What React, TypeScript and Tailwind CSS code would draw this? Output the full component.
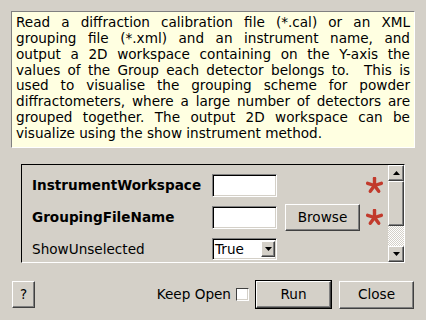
import React from "react";

const raised =
  "border-t border-l border-t-white border-l-white border-b border-r border-b-[#404040] border-r-[#404040] shadow-[inset_-1px_-1px_0_#808080] bg-[#d4d0c8]";

function Star() {
  const arms = [-90, -18, 54, 126, 198];
  return (
    <svg width="17" height="17" viewBox="-8.5 -8.5 17 17">
      {arms.map((a) => {
        const r = (a * Math.PI) / 180;
        return (
          <line
            key={a}
            x1={0}
            y1={0}
            x2={Math.cos(r) * 7.2}
            y2={Math.sin(r) * 7.2}
            stroke="#c23a2c"
            strokeWidth={3.4}
            strokeLinecap="round"
          />
        );
      })}
    </svg>
  );
}

function ArrowUp() {
  return (
    <svg width="7" height="4" viewBox="0 0 7 4">
      <polygon points="0,4 7,4 3.5,0" fill="#000" />
    </svg>
  );
}
function ArrowDown() {
  return (
    <svg width="7" height="4" viewBox="0 0 7 4">
      <polygon points="0,0 7,0 3.5,4" fill="#000" />
    </svg>
  );
}

const sunken =
  "bg-white border-t border-l border-t-[#808080] border-l-[#808080] border-b border-r border-b-white border-r-white shadow-[inset_1px_1px_0_#000000,inset_-1px_-1px_0_#d4d0c8]";

const lines = [
  "Read a diffraction calibration file (*.cal) or an XML",
  "grouping file (*.xml) and an instrument name, and",
  "output a 2D workspace containing on the Y-axis the",
  "values of the Group each detector belongs to.\u00a0 This is",
  "used to visualise the grouping scheme for powder",
  "diffractometers, where a large number of detectors are",
  "grouped together. The output 2D workspace can be",
];

export default function App() {
  return (
    <div
      className="w-[426px] h-[320px] bg-[#d4d0c8] text-black flex flex-col overflow-hidden"
      style={{ fontFamily: '"DejaVu Sans", sans-serif' }}
    >
      <div className="pt-[11px] pl-[11px]">
        <div className="w-[404px] h-[137px] bg-[#ffffe1] border-t border-l border-t-[#808080] border-l-[#808080] border-b border-r border-b-white border-r-white pl-[4px] pr-[4px] pt-[3px] text-[13.6px] leading-[15.86px]">
          {lines.map((l) => (
            <div key={l} className="text-justify [text-align-last:justify] whitespace-nowrap">
              {l}
            </div>
          ))}
          <div>visualize using the show instrument method.</div>
        </div>
      </div>

      <div className="mt-[16px] ml-[21px] w-[384px] h-[99px] flex border-t border-l border-t-black border-l-black border-b border-r border-b-white border-r-white">
        <div className="flex-1 overflow-hidden pl-[10px] pt-[4px] text-[13.6px]">
          <div className="h-[32px] flex items-center">
            <div className="w-[180px] font-bold">InstrumentWorkspace</div>
            <div className={`w-[65px] h-[23px] ${sunken}`}></div>
            <div className="w-[83px]"></div>
            <div className="ml-[6px] w-[17px] h-[17px] flex"><Star /></div>
          </div>
          <div className="h-[32px] flex items-center">
            <div className="w-[180px] font-bold">GroupingFileName</div>
            <div className={`w-[65px] h-[23px] ${sunken}`}></div>
            <div className="w-[83px] pl-[8px]">
              <div className={`w-[75px] h-[27px] flex items-center justify-center ${raised}`}>Browse</div>
            </div>
            <div className="ml-[6px] w-[17px] h-[17px] flex"><Star /></div>
          </div>
          <div className="h-[32px] flex items-center">
            <div className="w-[180px]">ShowUnselected</div>
            <div className={`w-[65px] h-[22px] flex items-center justify-between pl-[1px] pr-[1px] ${sunken}`}>
              <span className="pl-[1px]">True</span>
              <div className={`w-[14px] h-[16px] flex items-center justify-center ${raised}`}>
                <ArrowDown />
              </div>
            </div>
          </div>
        </div>
        <div className="w-[16px] flex flex-col">
          <div className={`h-[16px] flex items-center justify-center ${raised}`}>
            <ArrowUp />
          </div>
          <div className={`h-[45px] ${raised}`}></div>
          <div className="h-[20px] bg-[repeating-conic-gradient(#ffffff_0%_25%,#d4d0c8_0%_50%)] bg-[length:2px_2px]"></div>
          <div className={`h-[16px] flex items-center justify-center ${raised}`}>
            <ArrowDown />
          </div>
        </div>
      </div>

      <div className="mt-[17px] flex items-center pl-[12px] pr-[12px] h-[29px] text-[13.6px]">
        <div className={`w-[23px] h-[27px] flex items-center justify-center ${raised}`}>?</div>
        <div className="flex-1"></div>
        <span>Keep Open</span>
        <div className="ml-[5px] w-[13px] h-[13px] bg-white border-t border-l border-t-[#404040] border-l-[#404040] border-b border-r border-b-white border-r-white shadow-[inset_-1px_-1px_0_#d4d0c8]"></div>
        <div className="ml-[6px] w-[77px] h-[29px] border border-black flex">
          <div className={`flex-1 flex items-center justify-center ${raised}`}>Run</div>
        </div>
        <div className={`ml-[7px] w-[75px] h-[28px] flex items-center justify-center ${raised}`}>Close</div>
      </div>
    </div>
  );
}
